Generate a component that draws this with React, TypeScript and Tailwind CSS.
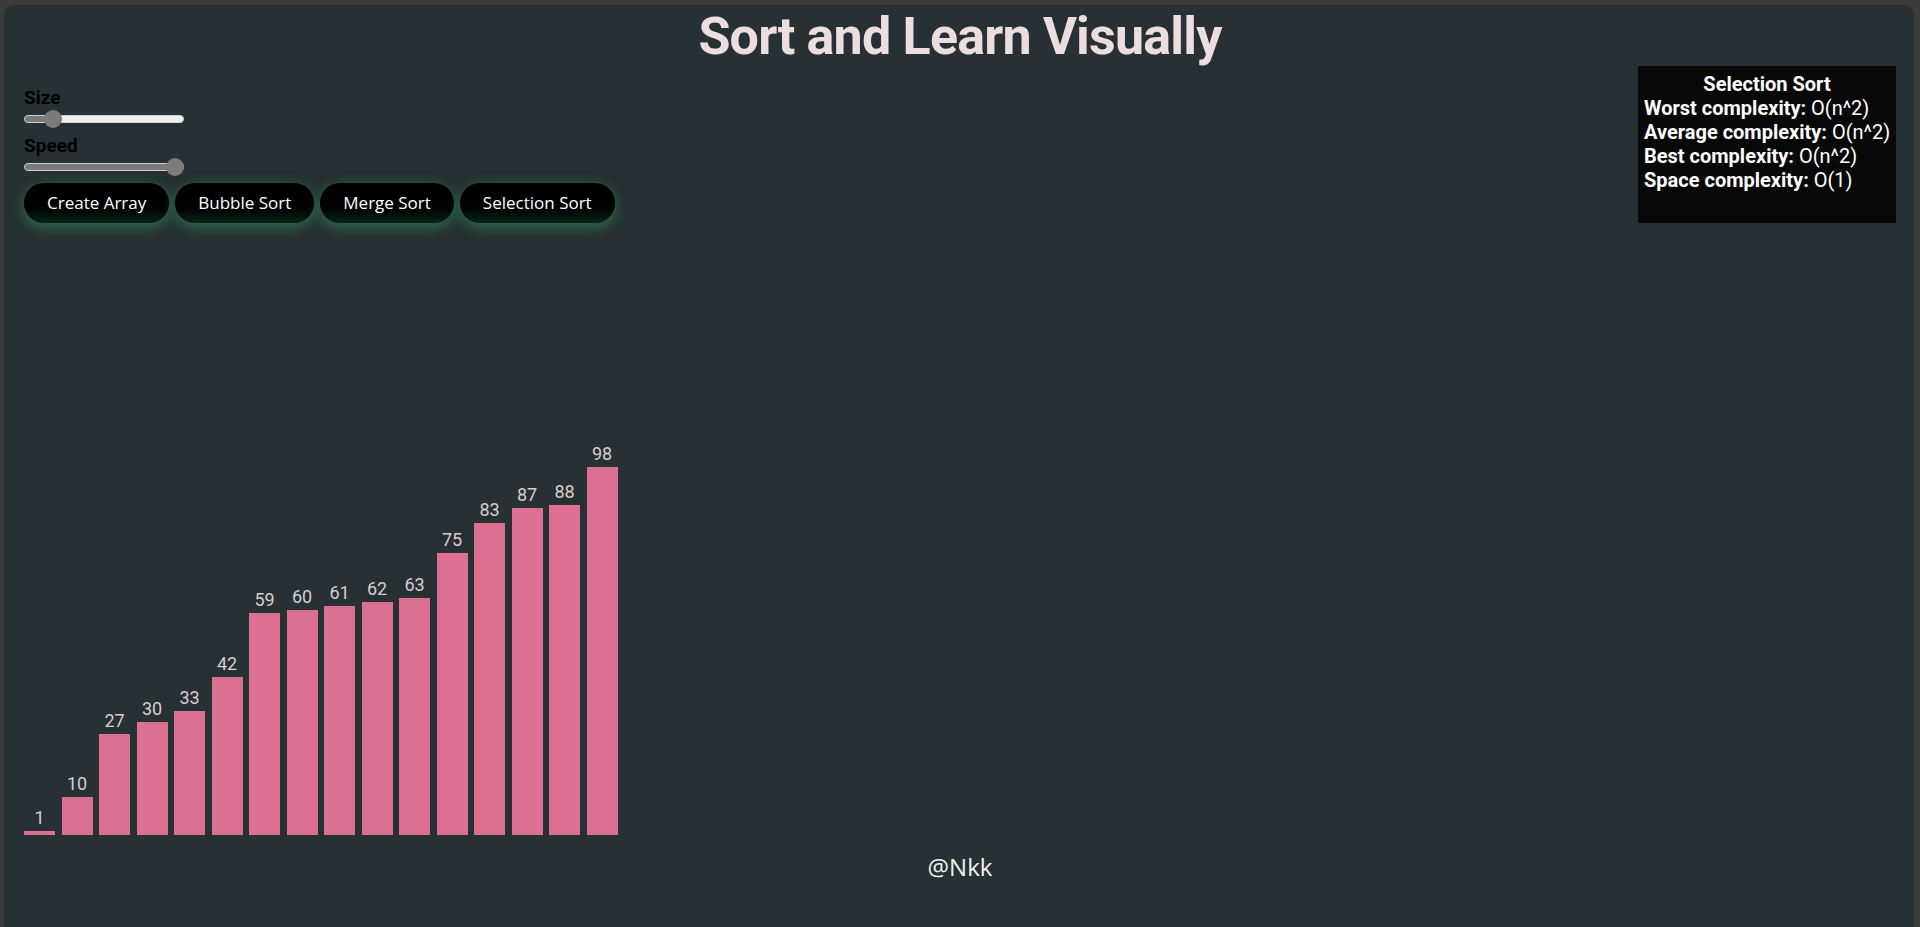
const values = [1, 10, 27, 30, 33, 42, 59, 60, 61, 62, 63, 75, 83, 87, 88, 98];

const buttons = ["Create Array", "Bubble Sort", "Merge Sort", "Selection Sort"];

const complexity = [
  { label: "Worst complexity:", value: "O(n^2)" },
  { label: "Average complexity:", value: "O(n^2)" },
  { label: "Best complexity:", value: "O(n^2)" },
  { label: "Space complexity:", value: "O(1)" },
];

const Slider = ({ pct }: { pct: number }) => {
  // thumb centre travels between 9px and width-9px
  const left = 9 + (142 * pct) / 100;
  return (
    <div className="relative flex h-[18px] w-[160px] items-center">
      <div className="h-2 w-full overflow-hidden rounded-full border border-[#d0d0d0] bg-[#efefef]">
        <div className="h-full bg-[#7b7b7b]" style={{ width: `${left}px` }}></div>
      </div>
      <div
        className="absolute top-0 h-[18px] w-[18px] -translate-x-1/2 rounded-full bg-[#7b7b7b]"
        style={{ left: `${left}px` }}
      ></div>
    </div>
  );
};

const App = () => {
  return (
    <div className="h-[927px] overflow-hidden bg-[#3b3b3b] pl-[4px] pr-[6px] pt-[5px] font-['Roboto',sans-serif]">
      <div className="h-[960px] rounded-[10px] bg-[#273034] pl-5 pr-[18px] pt-[6px]">
        <h1 className="text-center text-[52px] font-bold leading-[52px] tracking-[-0.8px] text-[#ecdede]">
          Sort and Learn Visually
        </h1>

        <div className="mt-[3px] flex items-start justify-between">
          <div className="pt-[20px]">
            <div className="text-[19px] font-bold leading-6 text-black">Size</div>
            <Slider pct={14} />
            <div className="mt-[6px] text-[19px] font-bold leading-6 text-black">Speed</div>
            <Slider pct={100} />
            <div className="mt-[7px] flex gap-[6px]">
              {buttons.map((b) => (
                <button
                  key={b}
                  className="h-10 rounded-full bg-gradient-to-b from-black from-40% to-[#0b2517] px-[23px] font-['Open_Sans',sans-serif] text-[17px] text-white shadow-[0_4px_14px_rgba(46,190,110,0.45)]"
                >
                  {b}
                </button>
              ))}
            </div>
          </div>

          <div className="h-[157px] w-[258px] bg-[#080808] p-[6px] text-[20px] leading-6 text-white">
            <div className="text-center font-bold">Selection Sort</div>
            {complexity.map((c) => (
              <div key={c.label} className="whitespace-nowrap">
                <span className="font-bold">{c.label}</span> {c.value}
              </div>
            ))}
          </div>
        </div>

        <div className="flex h-[612px] items-end gap-[6.5px]">
          {values.map((v, i) => (
            <div key={i} className="flex w-[31px] flex-col items-center">
              <span className="text-lg leading-[27px] text-[#d9cdcd]">{v}</span>
              <div className="w-full bg-[#db7093]" style={{ height: `${v * 3.755}px` }}></div>
            </div>
          ))}
        </div>

        <div className="mt-[16px] text-center font-['Open_Sans',sans-serif] text-[24px] leading-8 text-[#f2f2f2]">
          @Nkk
        </div>
      </div>
    </div>
  );
};

export default App;
